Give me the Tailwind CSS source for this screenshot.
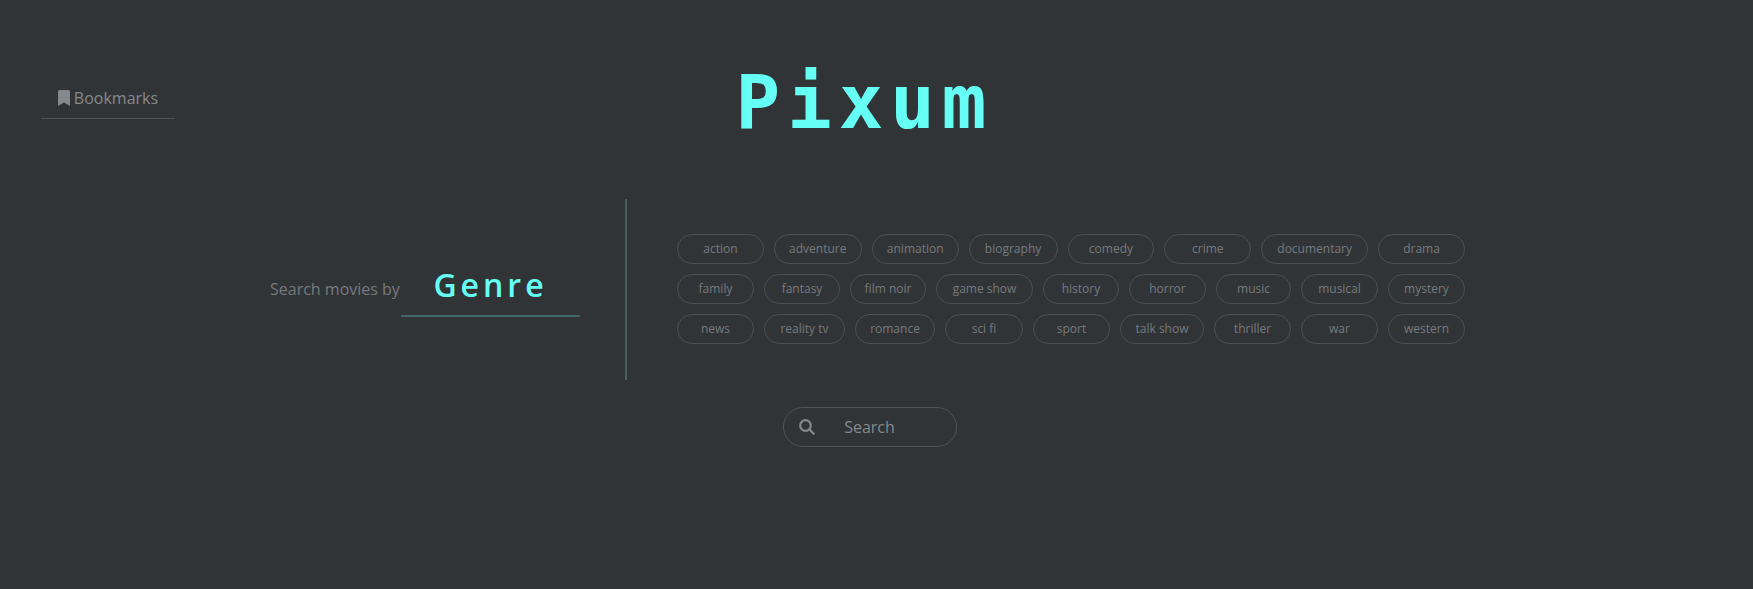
<!DOCTYPE html>
<html lang="en">
<head>
<meta charset="utf-8">
<title>Pixum</title>
<script src="https://cdn.jsdelivr.net/npm/@tailwindcss/browser@4"></script>
</head>
<body class="min-h-screen bg-[#313437] font-['Open_Sans',sans-serif] text-[#85888c]">
<header class="grid grid-cols-[1fr_auto_1fr] px-[41px] pt-[60px]">
  <div class="pt-[18px]">
    <button class="flex h-[41px] w-[134px] items-center justify-center gap-1 border-b border-[#505357] text-base font-medium">
      <svg class="h-4 w-3" viewBox="0 0 12 16" fill="currentColor" aria-hidden="true"><path d="M0 1.5Q0 0 1.5 0h9Q12 0 12 1.5V16l-6-3.5L0 16z"/></svg>
      Bookmarks
    </button>
  </div>
  <h1 class="mr-6 pt-1 font-['DejaVu_Sans_Mono',monospace] text-[74px] leading-19 font-bold tracking-[7px] text-[#66fff5]">Pixum</h1>
</header>
<main>
  <section class="mt-[59px] flex items-center justify-center pr-[18px]">
    <div class="flex items-center pb-2">
      <label for="mode" class="w-[131px] pt-1.5 whitespace-nowrap text-base font-normal text-[#76797d]">Search movies by</label>
      <button id="mode" class="h-[62px] w-[179px] border-b-2 border-[#406664] text-[32px] leading-10 font-semibold tracking-[4px] text-[#66fff5]">Genre</button>
    </div>
    <div class="ml-[45px] h-[181px] w-0.5 bg-[#406664]"></div>
    <div class="ml-[50px] flex w-[788px] flex-col gap-2.5 pb-0.5 text-xs font-normal text-[#76797d] [&_button]:h-[30px] [&_button]:grow [&_button]:rounded-full [&_button]:border [&_button]:border-[#4c4f53] [&_button]:whitespace-nowrap">
      <div class="flex gap-2.5">
        <button class="basis-[87px]">action</button><button class="basis-[88px]">adventure</button><button class="basis-[87px]">animation</button><button class="basis-[89px]">biography</button><button class="basis-[87px]">comedy</button><button class="basis-[87px]">crime</button><button class="basis-[107px]">documentary</button><button class="basis-[87px]">drama</button>
      </div>
      <div class="flex gap-2.5">
        <button class="basis-[77px]">family</button><button class="basis-[76px]">fantasy</button><button class="basis-[76px]">film noir</button><button class="basis-[97px]">game show</button><button class="basis-[76px]">history</button><button class="basis-[77px]">horror</button><button class="basis-[75px]">music</button><button class="basis-[77px]">musical</button><button class="basis-[77px]">mystery</button>
      </div>
      <div class="flex gap-2.5">
        <button class="basis-[77px]">news</button><button class="basis-[81px]">reality tv</button><button class="basis-[80px]">romance</button><button class="basis-[78px]">sci fi</button><button class="basis-[77px]">sport</button><button class="basis-[84px]">talk show</button><button class="basis-[77px]">thriller</button><button class="basis-[77px]">war</button><button class="basis-[77px]">western</button>
      </div>
    </div>
  </section>
  <div class="mt-[27px] flex justify-center pr-3.5">
    <button class="flex h-10 w-[174px] items-center rounded-full border border-[#505357] px-[15px] text-base font-medium">
      <svg class="size-4" viewBox="0 0 16 16" fill="none" stroke="currentColor" stroke-width="2.2" aria-hidden="true"><circle cx="6.5" cy="6.5" r="5.3"/><path d="m10.5 10.5 4.7 4.7"/></svg>
      <span class="grow pr-4 text-center">Search</span>
    </button>
  </div>
</main>
</body>
</html>
